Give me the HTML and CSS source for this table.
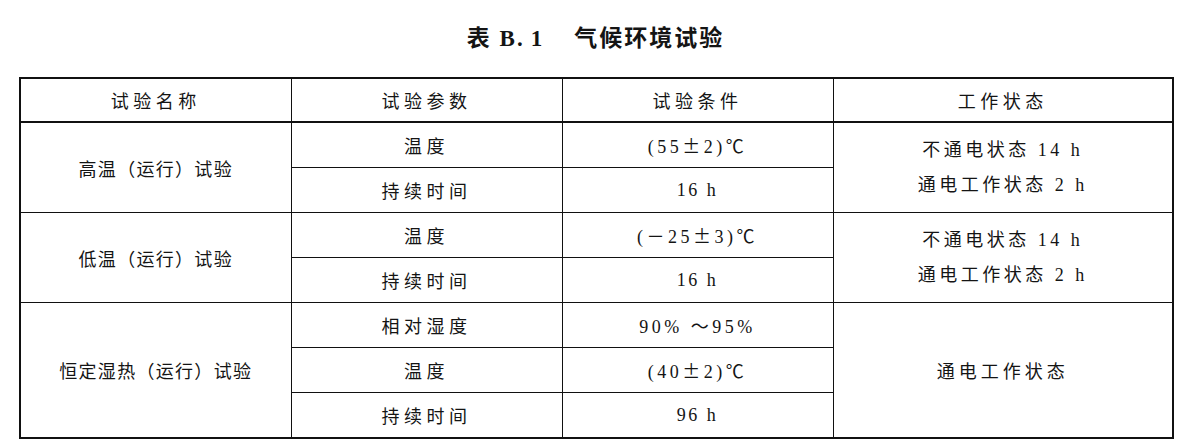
FILE: index.html
```html
<!DOCTYPE html>
<html lang="zh-CN">
<head>
<meta charset="utf-8">
<title>表 B.1 气候环境试验</title>
<link rel="stylesheet" href="styles.css">
</head>
<body>
<div class="page">
  <h1 class="caption"><span class="cap-no">表 B.<span class="cap-num">1</span></span><span class="cap-text">气候环境试验</span></h1>
  <table class="spec">
    <colgroup>
      <col class="c1"><col class="c2"><col class="c3"><col class="c4">
    </colgroup>
    <thead>
      <tr class="head">
        <th class="wide">试验名称</th>
        <th class="wide">试验参数</th>
        <th class="wide">试验条件</th>
        <th class="wide">工作状态</th>
      </tr>
    </thead>
    <tbody class="group">
      <tr>
        <td rowspan="2" class="name">高温（运行）试验</td>
        <td class="wide">温度</td>
        <td class="temp">(55<span class="cjk">±</span>2)℃</td>
        <td rowspan="2" class="state"><div>不通电状态 14 h</div><div>通电工作状态 2 h</div></td>
      </tr>
      <tr>
        <td class="wide">持续时间</td>
        <td class="val">16 h</td>
      </tr>
    </tbody>
    <tbody class="group">
      <tr>
        <td rowspan="2" class="name">低温（运行）试验</td>
        <td class="wide">温度</td>
        <td class="temp">(－25<span class="cjk">±</span>3)℃</td>
        <td rowspan="2" class="state"><div>不通电状态 14 h</div><div>通电工作状态 2 h</div></td>
      </tr>
      <tr>
        <td class="wide">持续时间</td>
        <td class="val">16 h</td>
      </tr>
    </tbody>
    <tbody class="group">
      <tr>
        <td rowspan="3" class="name">恒定湿热（运行）试验</td>
        <td class="wide">相对湿度</td>
        <td class="temp">90% ～95%</td>
        <td rowspan="3" class="wide2">通电工作状态</td>
      </tr>
      <tr>
        <td class="wide">温度</td>
        <td class="temp">(40<span class="cjk">±</span>2)℃</td>
      </tr>
      <tr>
        <td class="wide">持续时间</td>
        <td class="val">96 h</td>
      </tr>
    </tbody>
  </table>
</div>
</body>
</html>
```
FILE: styles.css
```css
html, body {
  margin: 0;
  padding: 0;
  background: #fff;
}
body {
  color: #141414;
  font-family: "Liberation Serif", "Noto Sans CJK SC", serif;
}
.page {
  width: 1153px;
  padding: 0 0 0 19px;
}
.caption {
  margin: 0;
  height: 77px;
  display: flex;
  justify-content: center;
  align-items: center;
  padding-bottom: 6px;
  box-sizing: border-box;
  font-size: 23px;
  font-weight: bold;
  letter-spacing: 2px;
  font-family: "Liberation Serif", "Noto Sans CJK SC", serif;
}
.cap-no {
  margin-right: 30px;
}
.cap-num {
  margin-left: 6px;
}
.spec {
  border-collapse: collapse;
  width: 1153px;
  table-layout: fixed;
  border: 2px solid #111;
  font-size: 18px;
  font-weight: normal;
}
.c1 { width: 271px; }
.c2 { width: 271px; }
.c3 { width: 271px; }
.c4 { width: 340px; }
.spec th, .spec td {
  border: 1px solid #111;
  text-align: center;
  vertical-align: middle;
  padding: 0;
  font-weight: normal;
  letter-spacing: 1.5px;
}
.spec .head th {
  height: 42px;
  border-bottom: 2px solid #111;
}
.spec td {
  height: 44px;
}
.spec .group {
  border-top: 1px solid #111;
}
.name {
  letter-spacing: 1.3px !important;
}
.val {
  letter-spacing: 2.5px !important;
}
.temp {
  letter-spacing: 3.5px !important;
}
.cjk {
  font-family: "Noto Sans CJK SC", sans-serif;
}
.wide {
  letter-spacing: 4.5px !important;
}
.wide2 {
  letter-spacing: 4px !important;
}
.state div {
  line-height: 35px;
  letter-spacing: 3.5px;
}
```
